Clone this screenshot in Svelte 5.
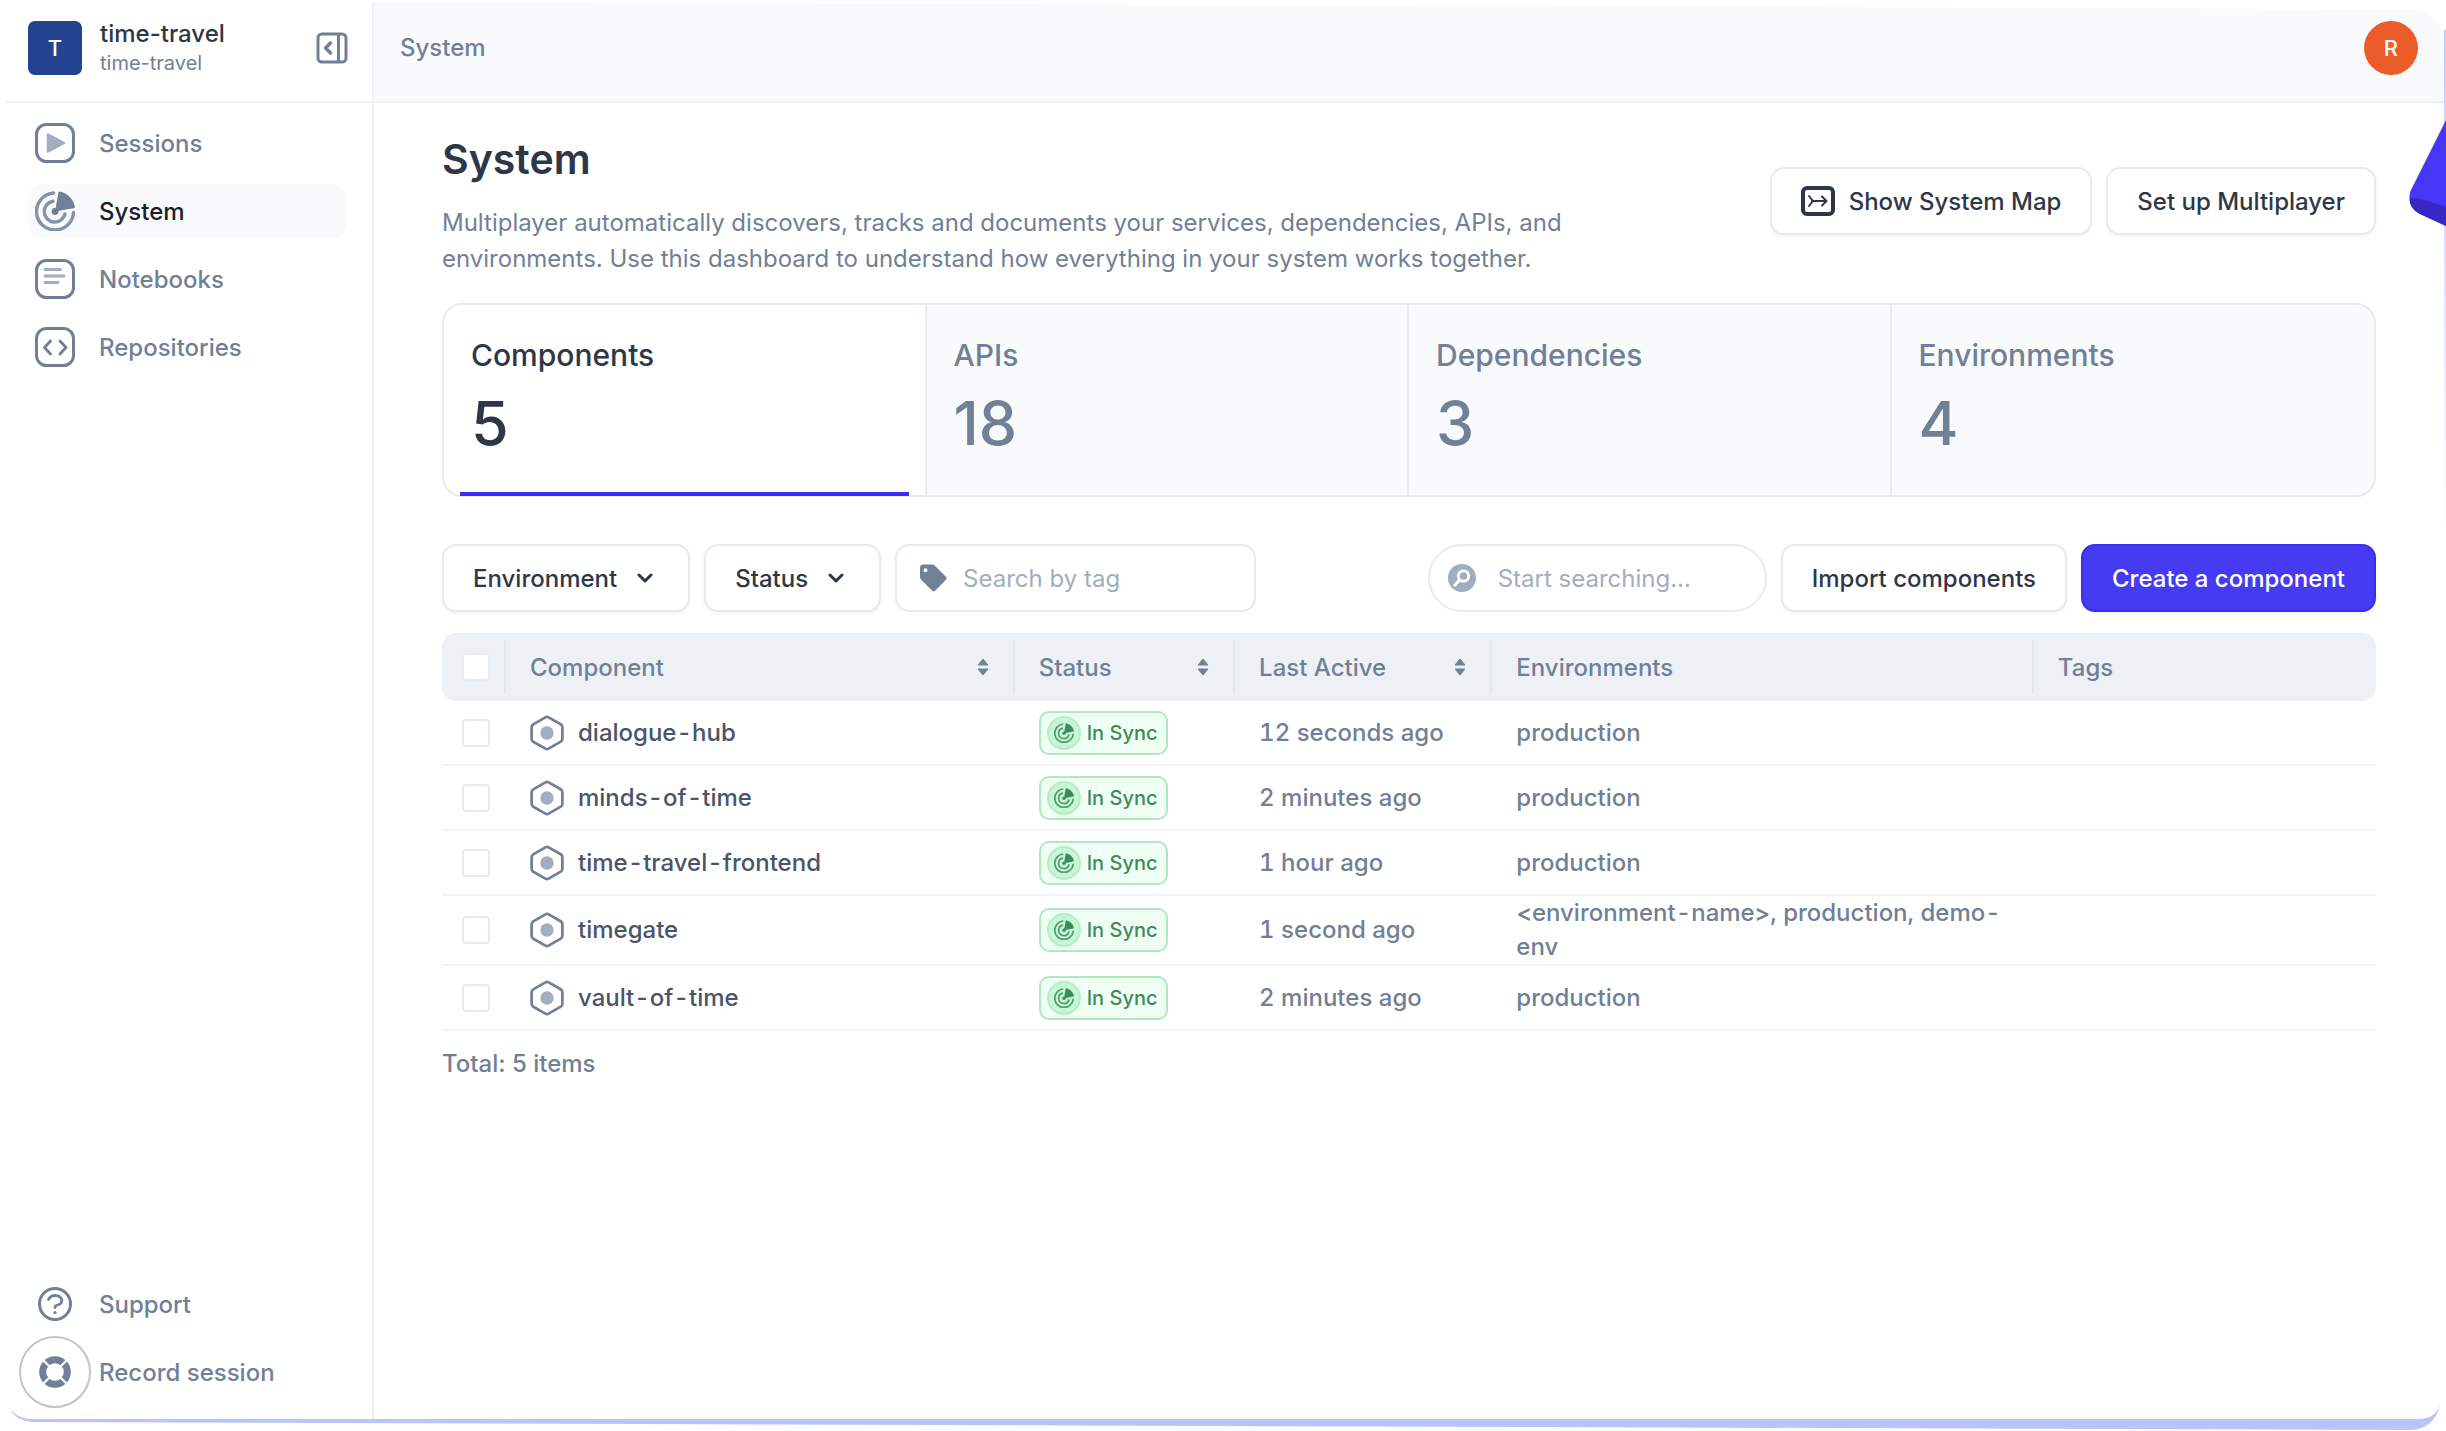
<script>
  let active = 'System';
  let activeTab = 'Components';

  const nav = ['Sessions', 'System', 'Notebooks', 'Repositories'];

  const stats = [
    { label: 'Components', value: 5 },
    { label: 'APIs', value: 18 },
    { label: 'Dependencies', value: 3 },
    { label: 'Environments', value: 4 }
  ];

  const columns = [
    { label: 'Component', sortable: true },
    { label: 'Status', sortable: true },
    { label: 'Last Active', sortable: true },
    { label: 'Environments', sortable: false },
    { label: 'Tags', sortable: false }
  ];

  const rows = [
    { name: 'dialogue-hub', seen: '12 seconds ago', envs: 'production' },
    { name: 'minds-of-time', seen: '2 minutes ago', envs: 'production' },
    { name: 'time-travel-frontend', seen: '1 hour ago', envs: 'production' },
    { name: 'timegate', seen: '1 second ago', envs: '<environment-name>, production, demo-env' },
    { name: 'vault-of-time', seen: '2 minutes ago', envs: 'production' }
  ];
</script>

{#snippet radar()}
  <path d="M18.500 2A18.500 18.500 0 1 0 38.500 21.500" fill="none" stroke="currentColor" stroke-width="3.400" opacity="0.85" />
  <path d="M18 10.200A10.500 10.500 0 1 0 30 23" fill="none" stroke="currentColor" stroke-width="3.400" opacity="0.85" />
  <circle cx="20" cy="20.500" r="3.400" fill="currentColor" />
  <path d="M23.500 1.200C24 .6 24.600.6 25.400.8C33 2.600 38.500 8.500 39.800 15.500C40 16.500 39.500 17 38.500 17.200L20 20.500Z" fill="currentColor" />
{/snippet}

<div class="window">
  <aside class="sidebar">
    <div class="workspace">
      <span class="logo">T</span>
      <div class="names">
        <strong>time-travel</strong>
        <span>time-travel</span>
      </div>
      <button class="collapse" aria-label="Collapse sidebar">
        <svg width="32" height="32" viewBox="0 0 32 32" fill="none" stroke="currentColor">
          <rect x="2" y="2" width="28" height="28" rx="4" stroke-width="3" />
          <path d="M22.500 2v28" stroke-width="3" />
          <path d="M14.500 11l-5 5 5 5" stroke-width="3.500" stroke-linecap="round" stroke-linejoin="round" />
        </svg>
      </button>
    </div>

    <nav class="nav">
      {#each nav as item}
        <a href="#{item.toLowerCase()}" class:active={item === active}>
          <svg width="40" height="40" viewBox="0 0 40 40" fill="none" stroke="currentColor" stroke-linecap="round" stroke-linejoin="round">
            {#if item === 'System'}
              <g stroke="none">{@render radar()}</g>
            {:else}
              <rect x="1.500" y="1.500" width="37" height="37" rx="10" stroke-width="3" />
            {/if}
            {#if item === 'Sessions'}
              <path d="M13 11.500v17l16-8.500z" fill="#a0aec0" stroke="#a0aec0" stroke-width="2.500" />
            {:else if item === 'Notebooks'}
              <path d="M10 10.500h15.500M10 17h19M10 23.500h13" stroke="#a0aec0" stroke-width="2.800" />
            {:else if item === 'Repositories'}
              <path d="M15.500 14l-6 6.500 6 6.500M25 14l6 6.500-6 6.500" stroke-width="2.800" />
            {/if}
          </svg>
          {item}
        </a>
      {/each}
    </nav>

    <div class="nav bottom">
      <a href="#support">
        <svg width="40" height="40" viewBox="0 0 40 40" fill="none" stroke="currentColor" stroke-linecap="round">
          <circle cx="20" cy="20" r="15.500" stroke-width="3" />
          <path d="M13.500 15.500C15 12.500 17.500 11.500 20 11.500C24 11.500 26.800 13.500 26.800 16.700C26.800 19.500 24.500 20.500 22.500 21C20.500 21.500 20 22.200 20 23.500" stroke-width="2.800" />
          <circle cx="20" cy="28.500" r="1.600" fill="currentColor" stroke="none" />
        </svg>
        Support
      </a>
      <a href="#record">
        <span class="record">
          <svg width="32" height="32" viewBox="0 0 32 32" fill="none" stroke="currentColor" stroke-width="7">
            <circle cx="16" cy="16" r="12.300" />
            <path d="M3 3l8 8M29 3l-8 8M3 29l8-8M29 29l-8-8" stroke="#fff" stroke-width="2.200" />
          </svg>
        </span>
        Record session
      </a>
    </div>
  </aside>

  <div class="page">
    <header class="topbar">
      <span>System</span>
      <button class="avatar">R</button>
    </header>

    <main>
      <section class="intro">
        <div>
          <h1>System</h1>
          <p>
            Multiplayer automatically discovers, tracks and documents your services, dependencies, APIs, and
            environments. Use this dashboard to understand how everything in your system works together.
          </p>
        </div>
        <div class="actions">
          <button class="btn">
            <svg width="34" height="30" viewBox="0 0 34 30" fill="none" stroke="currentColor">
              <rect x="2" y="2" width="30" height="26" rx="4" stroke-width="4" />
              <path d="M8 10l4 5-4 5M11 15h14M21 10.500l4.500 4.500-4.500 4.500" stroke-width="2" stroke-linecap="round" stroke-linejoin="round" />
            </svg>
            Show System Map
          </button>
          <button class="btn">Set up Multiplayer</button>
        </div>
      </section>

      <section class="stats">
        {#each stats as stat}
          <button class="stat" class:selected={stat.label === activeTab} on:click={() => (activeTab = stat.label)}>
            <span>{stat.label}</span>
            <b>{stat.value}</b>
          </button>
        {/each}
      </section>

      <section class="filters">
        {#each ['Environment', 'Status'] as filter}
          <button class="btn">
            {filter}
            <svg class="chevron" width="16" height="10" viewBox="0 0 16 10" fill="none" stroke="currentColor" stroke-width="3" stroke-linecap="round" stroke-linejoin="round">
              <path d="M2 2l6 6 6-6" />
            </svg>
          </button>
        {/each}
        <label class="field tag">
          <svg width="28" height="28" viewBox="0 0 28 28">
            <path fill="currentColor" fill-rule="evenodd" d="M1 4a3.500 3.500 0 0 1 3.500-3.500H13c1 0 2 .4 2.700 1.100l11 11a2.500 2.500 0 0 1 0 3.500L16.500 26.500a2.500 2.500 0 0 1-3.500 0L2.100 15.700A4 4 0 0 1 1 13zM6.500 4.200a2 2 0 1 0 0 4 2 2 0 0 0 0-4z" />
          </svg>
          <input type="text" placeholder="Search by tag" aria-label="Search by tag" />
        </label>
        <label class="field search">
          <svg width="28" height="28" viewBox="0 0 28 28" fill="none">
            <circle cx="14" cy="14" r="14" fill="currentColor" />
            <circle cx="15.500" cy="12" r="5.200" stroke="#fff" stroke-width="2.800" />
            <path d="M11.500 16l-4.500 5" stroke="#fff" stroke-width="3.200" stroke-linecap="round" />
          </svg>
          <input type="text" placeholder="Start searching..." aria-label="Search components" />
        </label>
        <button class="btn">Import components</button>
        <button class="btn primary">Create a component</button>
      </section>

      <table>
        <colgroup>
          <col class="c-check" />
          <col class="c-name" />
          <col class="c-status" />
          <col class="c-seen" />
          <col class="c-envs" />
          <col />
        </colgroup>
        <thead>
          <tr>
            <th class="check"><input type="checkbox" aria-label="Select all" /></th>
            {#each columns as column}
              <th>
                <div class="th">
                  {column.label}
                  {#if column.sortable}
                    <svg width="12" height="18" viewBox="0 0 12 18" fill="currentColor" stroke="currentColor" stroke-width="1" stroke-linejoin="round">
                      <path d="M6 1l5 6H1zM6 17l5-6H1z" />
                    </svg>
                  {/if}
                </div>
              </th>
            {/each}
          </tr>
        </thead>
        <tbody>
          {#each rows as row}
            <tr>
              <td class="check"><input type="checkbox" aria-label="Select {row.name}" /></td>
              <td>
                <div class="name">
                  <svg width="34" height="36" viewBox="0 0 32 34" fill="none">
                    <path d="M14.500 2.200a3 3 0 0 1 3 0l11.500 6.600a3 3 0 0 1 1.500 2.600v11.200a3 3 0 0 1-1.500 2.600l-11.500 6.600a3 3 0 0 1-3 0L3 25.200a3 3 0 0 1-1.500-2.600V11.400A3 3 0 0 1 3 8.800z" stroke="#718096" stroke-width="2.600" />
                    <circle cx="16" cy="17" r="6.300" fill="#a0aec0" />
                  </svg>
                  {row.name}
                </div>
              </td>
              <td>
                <span class="badge">
                  <i>
                    <svg width="20" height="20" viewBox="0 0 40 40">{@render radar()}</svg>
                  </i>
                  In Sync
                </span>
              </td>
              <td>{row.seen}</td>
              <td>{row.envs}</td>
              <td></td>
            </tr>
          {/each}
        </tbody>
      </table>
      <p class="total">Total: {rows.length} items</p>
    </main>
  </div>

  <svg class="edge top" viewBox="0 0 2446 60" preserveAspectRatio="none" aria-hidden="true">
    <path d="M0 0H2446V60H2444V46C2444 22 2428 9 2404 9L1740 7L373 2H0Z" fill="#fff" />
  </svg>
  <svg class="edge" viewBox="0 0 2446 60" preserveAspectRatio="none" aria-hidden="true">
    <path d="M10 38C15 44 22 48 32 48H2416C2430 48 2436 44 2440 34C2436 50 2426 59 2410 59L32 51C22 50 14 46 10 38Z" fill="#b8c4fc" />
  </svg>
  <div class="shade"></div>
  <svg class="ribbon" width="38" height="106" viewBox="0 0 38 106" aria-hidden="true">
    <path d="M38 0L3 70C-1 80 3 90 12 94L38 106Z" fill="#4637f8" />
    <path d="M2 78C8 78 14 79 20 81L38 87V106L12 94C4 89 1 84 2 78Z" fill="#3728c4" />
  </svg>
</div>

<style>
  :global(body) {
    background: #fff;
  }

  .window {
    position: relative;
    display: flex;
    min-height: 100vh;
    overflow: hidden;
    box-sizing: border-box;
    padding: 0 0 12px 6px;
    font-family: Inter, 'Liberation Sans', sans-serif;
    font-size: 24px;
    font-weight: 500;
    color: #718096;
  }

  .window :global(*) {
    box-sizing: border-box;
  }

  button,
  input {
    font: inherit;
    color: inherit;
  }

  svg {
    flex: none;
    display: block;
  }

  .sidebar {
    display: flex;
    flex-direction: column;
    flex: none;
    width: 368px;
    border-right: 2px solid #edf2f7;
  }

  .workspace {
    display: flex;
    align-items: center;
    height: 103px;
    padding: 0 24px 6px 22px;
    border-bottom: 2px solid #edf2f7;
  }

  .logo {
    display: flex;
    align-items: center;
    justify-content: center;
    width: 54px;
    height: 54px;
    margin-right: 18px;
    border-radius: 7px;
    background: #234390;
    color: #fff;
    font-size: 22px;
  }

  .names {
    display: flex;
    flex-direction: column;
    flex: 1;
  }

  .names strong {
    font-weight: 500;
    line-height: 30px;
    color: #2d3748;
  }

  .names span {
    font-size: 20px;
    font-weight: 400;
    line-height: 28px;
  }

  .collapse {
    padding: 0;
    border: none;
    background: none;
    cursor: pointer;
  }

  .nav {
    display: flex;
    flex-direction: column;
    gap: 14px;
    padding: 13px 26px 0 22px;
  }

  .nav a {
    display: flex;
    align-items: center;
    gap: 24px;
    height: 54px;
    padding-left: 7px;
    border-radius: 14px;
    color: inherit;
    text-decoration: none;
  }

  .nav a.active {
    background: #f8fafc;
    color: #1a202c;
  }

  .nav a.active svg {
    color: #718096;
  }

  .bottom {
    margin-top: auto;
    padding-bottom: 20px;
  }

  .record {
    display: flex;
    align-items: center;
    justify-content: center;
    flex: none;
    width: 72px;
    height: 72px;
    margin: 0 -16px;
    border: 2px solid #c4c4c4;
    border-radius: 50%;
  }

  .page {
    flex: 1;
    min-width: 0;
  }

  .topbar {
    display: flex;
    align-items: center;
    justify-content: space-between;
    height: 103px;
    padding: 0 28px 6px 26px;
    border-bottom: 2px solid #edf2f7;
    background: #f8fafc;
  }

  .avatar {
    width: 54px;
    height: 54px;
    padding: 0;
    border: none;
    border-radius: 50%;
    background: #ec5c29;
    color: #fff;
    font-size: 22px;
  }

  main {
    padding: 32px 70px 0 68px;
  }

  .intro {
    display: flex;
    justify-content: space-between;
    gap: 40px;
  }

  h1 {
    margin: 0;
    font-size: 41px;
    font-weight: 600;
    line-height: 48px;
    color: #2d3748;
  }

  .intro p {
    max-width: 1140px;
    margin: 22px 0 0;
    font-weight: 400;
    line-height: 36px;
  }

  .actions {
    display: flex;
    gap: 14px;
    padding-top: 32px;
  }

  .btn {
    display: flex;
    align-items: center;
    gap: 14px;
    height: 68px;
    padding: 0 29px;
    border: 2px solid #e6ebf2;
    border-radius: 14px;
    background: #fff;
    box-shadow: 0 2px 3px rgba(45, 55, 72, 0.06);
    color: #2d3748;
    white-space: nowrap;
    cursor: pointer;
  }

  .btn.primary {
    border-color: #3a2cf0;
    background: #453bf2;
    color: #fff;
  }

  .chevron {
    margin: 0 6px;
  }

  .stats {
    display: grid;
    grid-template-columns: repeat(4, 1fr);
    margin-top: 26px;
    border: 2px solid #e6ebf2;
    border-radius: 20px;
    background: #f8fafc;
  }

  .stat {
    position: relative;
    display: flex;
    flex-direction: column;
    height: 190px;
    padding: 30px 27px;
    border: none;
    border-right: 2px solid #e6ebf2;
    background: none;
    text-align: left;
    cursor: pointer;
  }

  .stat:first-child {
    border-radius: 18px 0 0 18px;
  }

  .stat:last-child {
    border-right: none;
  }

  .stat span {
    font-size: 30px;
    line-height: 40px;
  }

  .stat b {
    font-size: 61px;
    font-weight: 500;
    line-height: 96px;
  }

  .stat.selected {
    background: #fff;
    color: #2d3748;
  }

  .stat.selected::after {
    content: '';
    position: absolute;
    right: 16px;
    bottom: -1px;
    left: 16px;
    height: 4px;
    background: #3c2cf0;
  }

  .filters {
    display: flex;
    gap: 14px;
    margin-top: 47px;
  }

  .field {
    display: flex;
    align-items: center;
    gap: 16px;
    height: 68px;
    padding: 0 22px;
    border: 2px solid #e6ebf2;
    border-radius: 14px;
  }

  .field input {
    flex: 1;
    min-width: 0;
    padding: 0;
    border: none;
    outline: none;
    background: none;
    font-weight: 400;
  }

  .field input::placeholder {
    color: #a0aec0;
    opacity: 1;
  }

  .field.tag {
    width: 361px;
  }

  .field.search {
    gap: 22px;
    width: 339px;
    margin-left: auto;
    padding: 0 18px;
    border-radius: 34px;
    color: #a0aec0;
  }

  table {
    width: 100%;
    margin-top: 21px;
    table-layout: fixed;
    border-collapse: separate;
    border-spacing: 0;
  }

  .c-check {
    width: 62px;
  }

  .c-name {
    width: 26.3%;
  }

  .c-status {
    width: 11.4%;
  }

  .c-seen {
    width: 13.3%;
  }

  .c-envs {
    width: 28%;
  }

  th {
    height: 68px;
    padding: 7px 0;
    background: #edf1f6;
    font-weight: 500;
    text-align: left;
  }

  th:first-child {
    border-radius: 14px 0 0 14px;
  }

  th:last-child {
    border-radius: 0 14px 14px 0;
  }

  .th {
    display: flex;
    align-items: center;
    justify-content: space-between;
    height: 54px;
    padding: 0 24px;
    border-left: 2px solid #e2e8f0;
  }

  td {
    height: 65px;
    padding: 0 26px;
    border-bottom: 2px solid #f3f6fa;
    line-height: 34px;
    font-variant-numeric: tabular-nums;
  }

  td.check,
  th.check {
    padding: 0 0 0 20px;
  }

  input[type='checkbox'] {
    display: block;
    appearance: none;
    width: 28px;
    height: 28px;
    margin: 0;
    border: 2px solid #e6ebf2;
    border-radius: 4px;
    background: #fff;
  }

  .name {
    display: flex;
    align-items: center;
    gap: 14px;
    color: #4a5568;
  }

  .badge {
    display: flex;
    align-items: center;
    gap: 6px;
    width: max-content;
    height: 44px;
    padding: 0 8px 0 6px;
    border: 2px solid #b0e8c0;
    border-radius: 10px;
    background: #f0fff4;
    color: #3f8a5c;
    font-size: 20px;
  }

  .badge i {
    display: flex;
    align-items: center;
    justify-content: center;
    width: 34px;
    height: 34px;
    border: 2px solid #b8ecc8;
    border-radius: 50%;
    background: #c6f6d5;
  }

  .total {
    margin: 15px 0 0;
    line-height: 36px;
  }

  .edge {
    position: absolute;
    bottom: 0;
    left: 0;
    width: 100%;
    height: 60px;
    pointer-events: none;
  }

  .edge.top {
    top: 0;
    bottom: auto;
  }

  .shade {
    position: absolute;
    top: 30px;
    right: 0;
    width: 2px;
    height: 500px;
    background: linear-gradient(#c3cbfc, #dfe3fd 50%, #fff);
  }

  .ribbon {
    position: absolute;
    top: 120px;
    right: 0;
  }
</style>
